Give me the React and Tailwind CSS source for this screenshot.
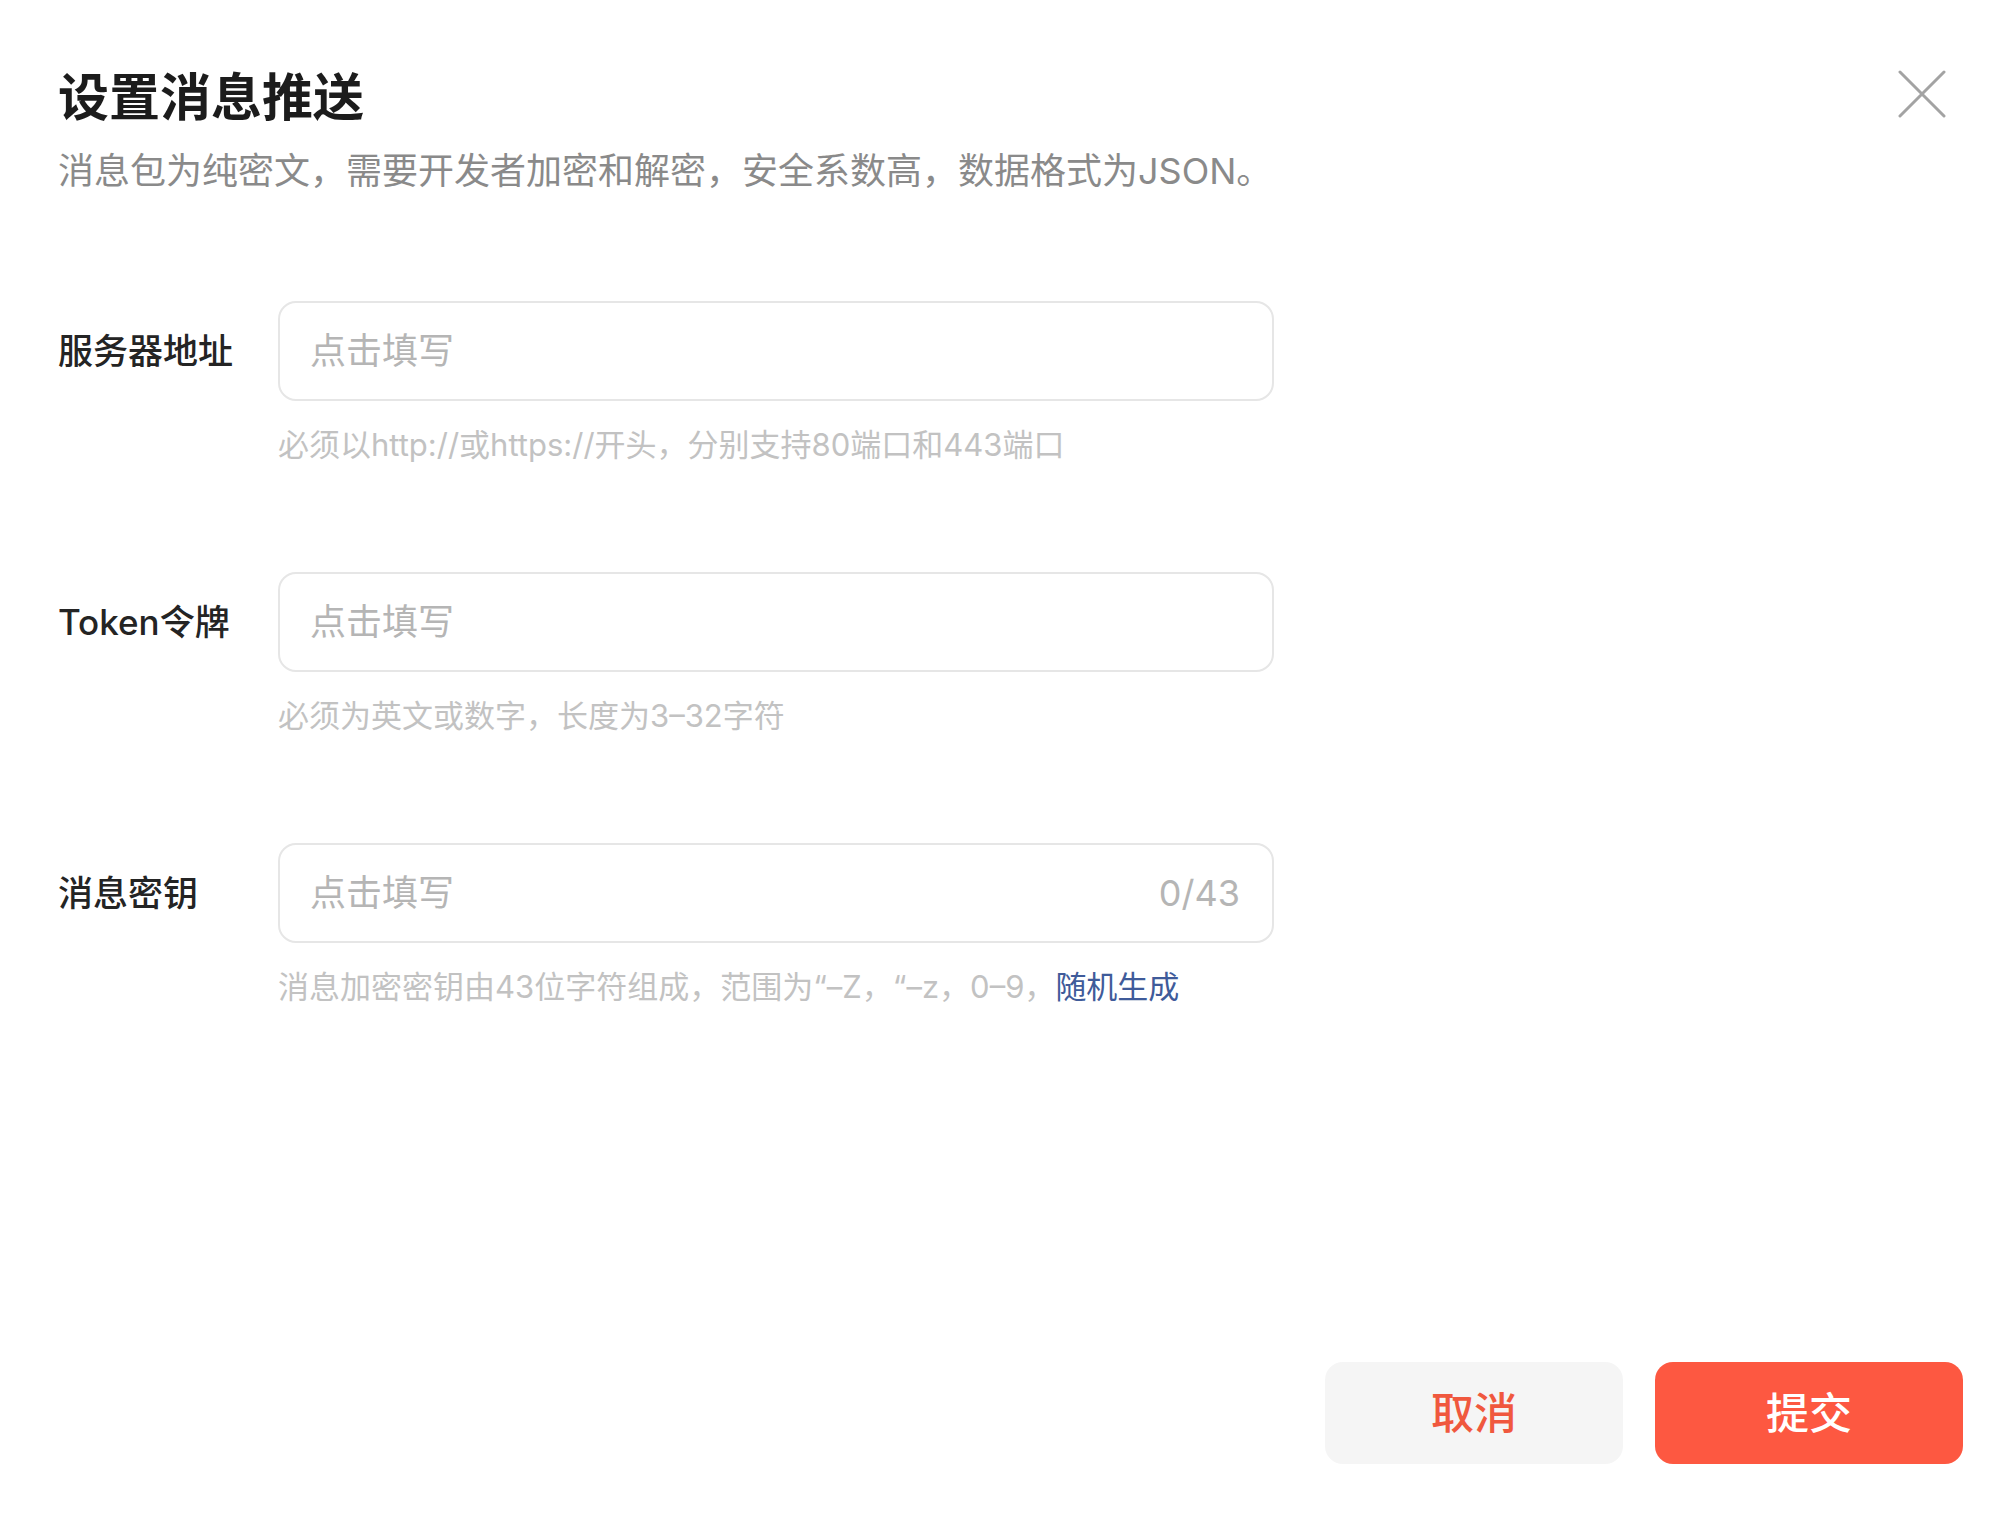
const fields = [
  { label: "服务器地址", hint: "必须以http://或https://开头，分别支持80端口和443端口" },
  { label: "Token令牌", hint: "必须为英文或数字，长度为3–32字符" },
  { label: "消息密钥", hint: "消息加密密钥由43位字符组成，范围为“–Z，“–z，0–9，", counter: "0/43", link: "随机生成" },
];

function CloseIcon() {
  return (
    <svg width="48" height="48" viewBox="0 0 48 48" fill="none">
      <path d="M2 2L46 46M46 2L2 46" stroke="#a3a3a3" strokeWidth="3" strokeLinecap="round" />
    </svg>
  );
}

export default function App() {
  return (
    <div className="h-screen w-full bg-white flex flex-col font-['Inter','Noto_Sans_CJK_SC',sans-serif]">
      {/* header */}
      <div className="flex justify-between items-start pl-[58px] pr-[66px] pt-[68px]">
        <div>
          <h1 className="text-[51px] leading-[60px] font-bold text-[#1c1c1c]">设置消息推送</h1>
          <p className="mt-[21px] text-[36px] leading-[44px] text-[#8a8a8a]">
            消息包为纯密文，需要开发者加密和解密，安全系数高，数据格式为JSON。
          </p>
        </div>
        <button className="mt-[2px]">
          <CloseIcon />
        </button>
      </div>

      {/* form */}
      <div className="flex flex-col gap-[107px] pl-[58px] mt-[108px]">
        {fields.map((f) => (
          <div key={f.label} className="flex">
            <div className="w-[220px] h-[100px] flex items-center text-[35px] font-medium text-[#242424]">
              {f.label}
            </div>
            <div className="w-[996px]">
              <div className="h-[100px] border-2 border-[#e6e6e6] rounded-[18px] flex items-center pl-[30px] pr-[32px]">
                <input
                  className="flex-1 outline-none bg-transparent text-[36px] text-[#333] placeholder:text-[#b5b5b5]"
                  placeholder="点击填写"
                />
                {f.counter && <span className="text-[36px] text-[#b5b5b5]">{f.counter}</span>}
              </div>
              <p className="mt-[24px] text-[31px] leading-[40px] text-[#c2c2c2]">
                {f.hint}
                {f.link && <span className="text-[#3f5b9a]">{f.link}</span>}
              </p>
            </div>
          </div>
        ))}
      </div>

      {/* footer */}
      <div className="mt-auto flex justify-end gap-[32px] pr-[49px] pb-[50px]">
        <button className="w-[298px] h-[102px] rounded-[18px] bg-[#f5f5f5] text-[43px] font-medium text-[#f0583e]">
          取消
        </button>
        <button className="w-[308px] h-[102px] rounded-[18px] bg-[#fd5841] text-[43px] font-medium text-white">
          提交
        </button>
      </div>
    </div>
  );
}
